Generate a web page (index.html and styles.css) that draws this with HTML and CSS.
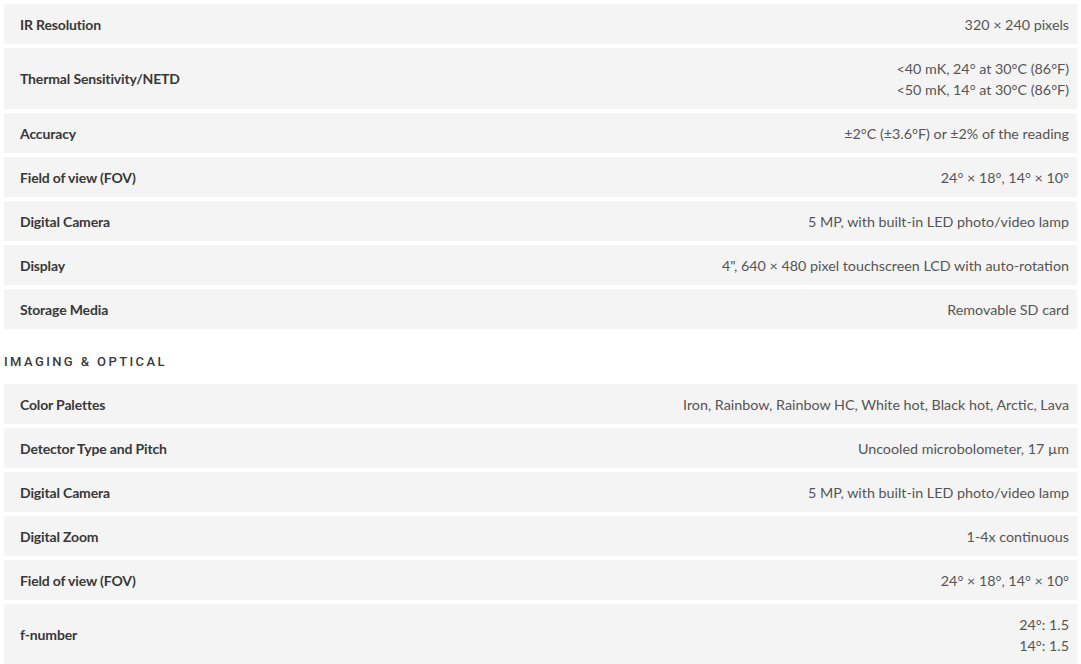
FILE: index.html
```html
<!DOCTYPE html>
<html lang="en">
<head>
  <meta charset="UTF-8" />
  <meta name="viewport" content="width=device-width, initial-scale=1.0" />
  <title>Specifications</title>
  <link rel="stylesheet" href="styles.css">
</head>
<body>
  <div class="specs">
    <div class="spec-list">
      <div class="spec-row"><div class="label">IR Resolution</div><div class="value">320 × 240 pixels</div></div>
      <div class="spec-row"><div class="label">Thermal Sensitivity/NETD</div><div class="value">&lt;40 mK, 24° at 30°C (86°F)<br>&lt;50 mK, 14° at 30°C (86°F)</div></div>
      <div class="spec-row"><div class="label">Accuracy</div><div class="value">±2°C (±3.6°F) or ±2% of the reading</div></div>
      <div class="spec-row"><div class="label">Field of view (FOV)</div><div class="value">24° × 18°, 14° × 10°</div></div>
      <div class="spec-row"><div class="label">Digital Camera</div><div class="value">5 MP, with built-in LED photo/video lamp</div></div>
      <div class="spec-row"><div class="label">Display</div><div class="value">4", 640 × 480 pixel touchscreen LCD with auto-rotation</div></div>
      <div class="spec-row"><div class="label">Storage Media</div><div class="value">Removable SD card</div></div>
    </div>

    <h3 class="section-title">Imaging &amp; Optical</h3>

    <div class="spec-list">
      <div class="spec-row"><div class="label">Color Palettes</div><div class="value">Iron, Rainbow, Rainbow HC, White hot, Black hot, Arctic, Lava</div></div>
      <div class="spec-row"><div class="label">Detector Type and Pitch</div><div class="value">Uncooled microbolometer, 17 µm</div></div>
      <div class="spec-row"><div class="label">Digital Camera</div><div class="value">5 MP, with built-in LED photo/video lamp</div></div>
      <div class="spec-row"><div class="label">Digital Zoom</div><div class="value">1-4x continuous</div></div>
      <div class="spec-row"><div class="label">Field of view (FOV)</div><div class="value">24° × 18°, 14° × 10°</div></div>
      <div class="spec-row"><div class="label">f-number</div><div class="value">24°: 1.5<br>14°: 1.5</div></div>
    </div>
  </div>
</body>
</html>
```

FILE: styles.css
```css
body {
  margin: 0;
  background: #ffffff;
  font-family: Lato, "Open Sans", sans-serif;
  font-size: 14px;
  color: #333333;
}
.specs {
  padding: 4px 4px 0 4px;
}
.spec-list {
  display: flex;
  flex-direction: column;
  gap: 4px;
}
.spec-row {
  display: flex;
  justify-content: space-between;
  align-items: center;
  background: #f4f4f4;
  padding: 9.5px 8px 9.5px 16px;
  line-height: 21px;
}
.label {
  font-weight: 700;
  color: #383838;
  letter-spacing: -0.15px;
}
.value {
  text-align: right;
  font-size: 14.3px;
  color: #555555;
}
.section-title {
  margin: 0;
  padding: 24px 0 13px 0;
  font-family: Roboto, sans-serif;
  font-size: 13px;
  font-weight: 500;
  line-height: 18px;
  text-transform: uppercase;
  letter-spacing: 2.4px;
  color: #3a3a3a;
}
```
